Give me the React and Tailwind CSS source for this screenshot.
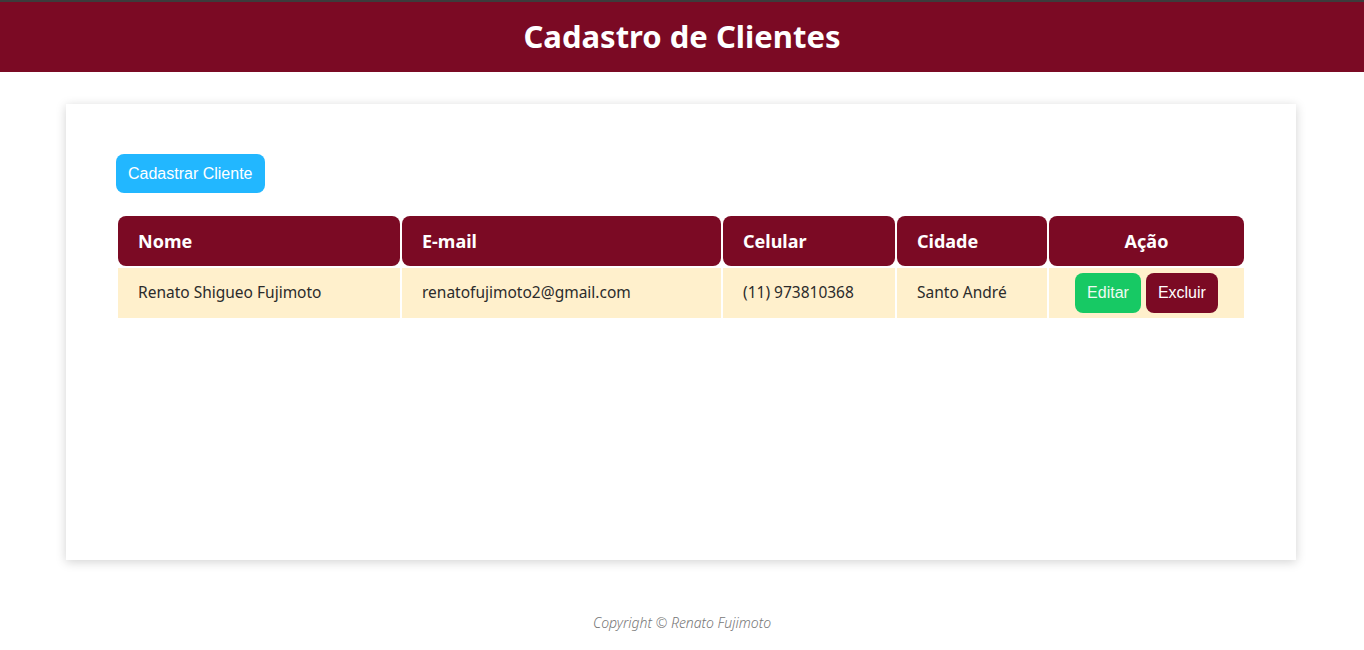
import React from 'react';

const clientes = [
  {
    nome: 'Renato Shigueo Fujimoto',
    email: 'renatofujimoto2@gmail.com',
    celular: '(11) 973810368',
    cidade: 'Santo André',
  },
];

export default function App() {
  return (
    <div className="min-h-[650px] bg-white font-['Noto_Sans',sans-serif]">
      {/* Header */}
      <header className="h-[72px] border-t-2 border-[#3c3c3c] bg-[#7b0a24] flex items-center justify-center">
        <h1 className="-mt-[2px] text-[31px] font-bold text-white">Cadastro de Clientes</h1>
      </header>

      {/* Card */}
      <main className="ml-[66px] mt-8 h-[456px] w-[1230px] bg-white px-[50px] pt-[50px] shadow-[0_2px_10px_rgba(0,0,0,0.18)]">
        <button className="h-[39px] rounded-lg bg-[#22b7ff] px-3 font-['Liberation_Sans',sans-serif] text-[16px] text-white">
          Cadastrar Cliente
        </button>

        <table className="mt-[21px] w-full border-separate border-spacing-[2px]">
          <thead>
            <tr className="h-[50px] text-[18px] font-bold text-white">
              <th className="w-[282px] rounded-lg bg-[#7b0a24] px-5 text-left">Nome</th>
              <th className="w-[319px] rounded-lg bg-[#7b0a24] px-5 text-left">E-mail</th>
              <th className="w-[172px] rounded-lg bg-[#7b0a24] px-5 text-left">Celular</th>
              <th className="w-[150px] rounded-lg bg-[#7b0a24] px-5 text-left">Cidade</th>
              <th className="rounded-lg bg-[#7b0a24] px-5 text-center">Ação</th>
            </tr>
          </thead>
          <tbody>
            {clientes.map((c, i) => (
              <tr key={i} className="h-[50px] text-[15.5px] text-[#2b2b2b]">
                <td className="bg-[#fff0cc] px-5">{c.nome}</td>
                <td className="bg-[#fff0cc] px-5">{c.email}</td>
                <td className="bg-[#fff0cc] px-5">{c.celular}</td>
                <td className="bg-[#fff0cc] px-5">{c.cidade}</td>
                <td className="bg-[#fff0cc] px-5 text-center">
                  <div className="flex items-center justify-center gap-[5px] font-['Liberation_Sans',sans-serif] text-[16px]">
                    <button className="h-10 rounded-lg bg-[#17c964] px-3 text-[#eefaf1]">Editar</button>
                    <button className="h-10 rounded-lg bg-[#7b0a24] px-3 text-white">Excluir</button>
                  </div>
                </td>
              </tr>
            ))}
          </tbody>
        </table>
      </main>

      {/* Footer */}
      <footer className="pt-[52px] text-center text-[14px] font-light italic text-[#777]">
        Copyright © Renato Fujimoto
      </footer>
    </div>
  );
}
